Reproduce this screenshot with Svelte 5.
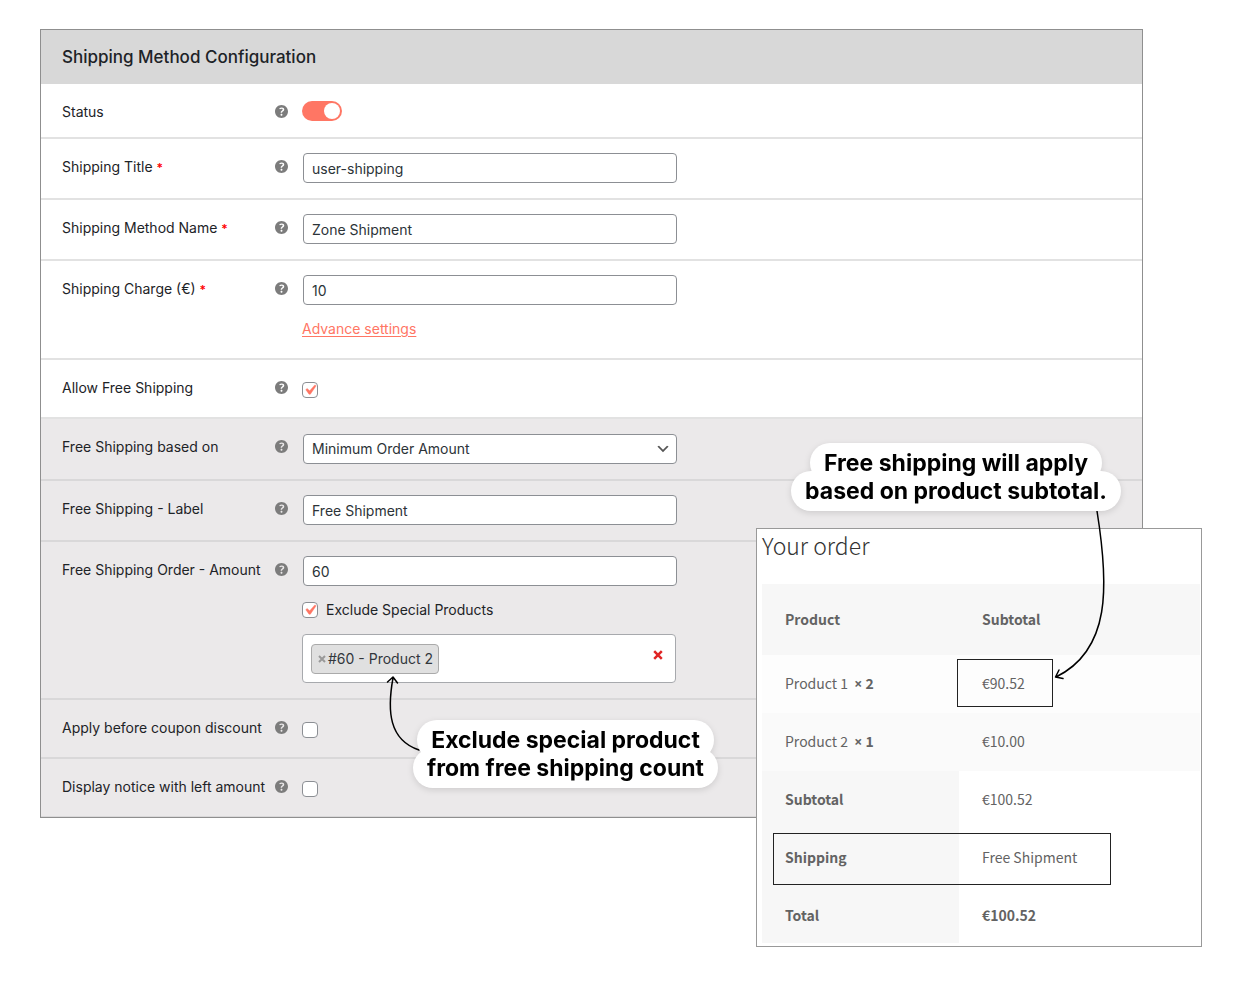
<script>
  const checkPath = 'M14.83 4.89l1.34.94-5.81 8.38H9.02L5.78 9.67l1.34-1.25 2.57 2.4z';

  let enabled = $state(true);
  let title = $state('user-shipping');
  let methodName = $state('Zone Shipment');
  let charge = $state('10');
  let allowFree = $state(true);
  let basis = $state('Minimum Order Amount');
  let freeLabel = $state('Free Shipment');
  let freeAmount = $state('60');
  let excludeSpecial = $state(true);
  let beforeCoupon = $state(false);
  let displayNotice = $state(false);
</script>

{#snippet help()}
  <svg class="help" viewBox="3 3 14 14" aria-hidden="true">
    <path
      d="M17 10c0-3.87-3.14-7-7-7-3.87 0-7 3.13-7 7s3.13 7 7 7c3.86 0 7-3.13 7-7zm-6.3 1.48H9.14v-.43c0-.38.08-.7.24-.98s.46-.57.88-.89c.41-.29.68-.53.81-.71.14-.18.2-.39.2-.62 0-.25-.09-.44-.28-.58-.19-.13-.45-.19-.79-.19-.58 0-1.25.19-2 .57l-.64-1.28c.87-.49 1.8-.74 2.77-.74.81 0 1.45.2 1.92.58.48.39.71.91.71 1.55 0 .43-.09.8-.29 1.11-.19.32-.57.67-1.11 1.06-.38.28-.61.49-.71.63-.1.15-.15.34-.15.57v.35zm-1.47 2.74c-.18-.17-.27-.42-.27-.73 0-.33.08-.58.26-.75s.43-.25.77-.25c.32 0 .57.09.75.26s.27.42.27.74c0 .3-.09.55-.27.72-.18.18-.43.27-.75.27-.33 0-.58-.09-.76-.26z"
    />
  </svg>
{/snippet}

{#snippet tick()}
  <svg class="tick" viewBox="0 0 20 20" aria-hidden="true"><path d={checkPath} /></svg>
{/snippet}

<div class="stage">
  <form class="panel" onsubmit={(e) => e.preventDefault()}>
    <h2>Shipping Method Configuration</h2>

    <div class="row">
      <label for="status">Status</label>
      {@render help()}
      <div class="control toggle-line">
        <input id="status" class="toggle" type="checkbox" bind:checked={enabled} />
      </div>
    </div>

    <div class="row">
      <label for="title">Shipping Title <span class="req">*</span></label>
      {@render help()}
      <div class="control"><input id="title" class="field" type="text" bind:value={title} /></div>
    </div>

    <div class="row">
      <label for="name">Shipping Method Name <span class="req">*</span></label>
      {@render help()}
      <div class="control"><input id="name" class="field" type="text" bind:value={methodName} /></div>
    </div>

    <div class="row">
      <label for="charge">Shipping Charge (€) <span class="req">*</span></label>
      {@render help()}
      <div class="control">
        <input id="charge" class="field" type="text" bind:value={charge} />
        <a class="advance" href="#advance">Advance settings</a>
      </div>
    </div>

    <div class="row">
      <label for="allow">Allow Free Shipping</label>
      {@render help()}
      <div class="control check-line">
        <span class="box"><input id="allow" type="checkbox" bind:checked={allowFree} />{@render tick()}</span>
      </div>
    </div>

    <div class="row shaded">
      <label for="basis">Free Shipping based on</label>
      {@render help()}
      <div class="control">
        <div class="select">
          <select id="basis" class="field" bind:value={basis}>
            <option>Minimum Order Amount</option>
          </select>
          <svg viewBox="0 0 20 20" aria-hidden="true"><path d="M5 6l5 5 5-5 2 1-7 7-7-7 2-1z" /></svg>
        </div>
      </div>
    </div>

    <div class="row shaded">
      <label for="free-label">Free Shipping - Label</label>
      {@render help()}
      <div class="control"><input id="free-label" class="field" type="text" bind:value={freeLabel} /></div>
    </div>

    <div class="row shaded">
      <label for="free-amount">Free Shipping Order - Amount</label>
      {@render help()}
      <div class="control">
        <input id="free-amount" class="field" type="text" bind:value={freeAmount} />
        <div class="exclude">
          <span class="box"><input id="exclude" type="checkbox" bind:checked={excludeSpecial} />{@render tick()}</span>
          <label for="exclude">Exclude Special Products</label>
        </div>
        <div class="multi">
          <span class="tag">
            <button type="button" aria-label="Remove product">
              <svg viewBox="0 0 8 8"><path d="M1 1l6 6M7 1l-6 6" /></svg>
            </button>#60 - Product 2
          </span>
          <button type="button" class="clear" aria-label="Clear all">
            <svg viewBox="0 0 10 10"><path d="M1.2 1.2l7.600 7.600M8.800 1.200l-7.600 7.600" /></svg>
          </button>
        </div>
      </div>
    </div>

    <div class="row shaded">
      <label for="coupon">Apply before coupon discount</label>
      {@render help()}
      <div class="control check-line">
        <span class="box"><input id="coupon" type="checkbox" bind:checked={beforeCoupon} />{@render tick()}</span>
      </div>
    </div>

    <div class="row shaded">
      <label for="notice">Display notice with left amount</label>
      {@render help()}
      <div class="control check-line">
        <span class="box"><input id="notice" type="checkbox" bind:checked={displayNotice} />{@render tick()}</span>
      </div>
    </div>
  </form>

  <section class="order">
    <h3>Your order</h3>
    <table>
      <thead>
        <tr><th scope="col">Product</th><th scope="col">Subtotal</th></tr>
      </thead>
      <tbody>
        <tr><td>Product 1 &nbsp;<b><span class="times">×</span> 2</b></td><td>€90.52</td></tr>
        <tr><td>Product 2 &nbsp;<b><span class="times">×</span> 1</b></td><td>€10.00</td></tr>
      </tbody>
      <tfoot>
        <tr><th scope="row">Subtotal</th><td>€100.52</td></tr>
        <tr><th scope="row">Shipping</th><td>Free Shipment</td></tr>
        <tr><th scope="row">Total</th><td><b>€100.52</b></td></tr>
      </tfoot>
    </table>
    <div class="mark mark-price"></div>
    <div class="mark mark-shipping"></div>
  </section>

  <svg class="arrow arrow-order" viewBox="0 0 60 175" aria-hidden="true">
    <path d="M47 5C59 80 61 144 6 171M9 164L5.500 171L13 172.500" />
  </svg>
  <svg class="arrow arrow-exclude" viewBox="0 0 40 84" aria-hidden="true">
    <path d="M35 77C5 67 3 38 9 5M3.500 9L9 4L13.500 10" />
  </svg>

  <p class="callout callout-order"><span>Free shipping will apply</span><span>based on product subtotal.</span></p>
  <p class="callout callout-exclude"><span>Exclude special product</span><span>from free shipping count</span></p>
</div>

<style>
  :global(body) {
    margin: 0;
    background: #fff;
  }

  .stage {
    position: relative;
    padding: 29px 100px 166px 40px;
    font-family: Inter, 'Liberation Sans', sans-serif;
    font-size: 14px;
    line-height: 20px;
    color: #1d2327;
  }

  .panel {
    border: 1px solid #8f8f8f;
    background: #fff;
  }

  h2 {
    margin: 0;
    padding: 15px 21px;
    background: #d8d8d8;
    font-size: 17px;
    line-height: 24px;
    font-weight: 500;
  }

  .row {
    display: grid;
    grid-template-columns: 213px 13px minmax(0, 374px);
    align-items: start;
    padding: 14px 21px 15px;
    border-bottom: 2px solid #e2e2e2;
  }

  .row:last-child {
    border-bottom-width: 1px;
  }

  .shaded {
    background: #ebe9ea;
    border-color: #d9d8d9;
  }

  .row > label {
    padding-top: 4px;
  }

  .req {
    color: #f00;
    font-size: 12px;
    font-weight: 600;
  }

  .help {
    width: 13px;
    height: 13px;
    margin-top: 7px;
    fill: #7c7c7c;
  }

  .control {
    width: 374px;
    margin-left: 15px;
  }

  .toggle-line {
    padding: 3px 0 1px;
    margin-left: 14px;
    height: 20px;
  }

  .check-line {
    padding: 8px 0 4px;
    margin-left: 14px;
  }

  .field {
    display: block;
    box-sizing: border-box;
    width: 100%;
    height: 30px;
    margin: 0;
    padding: 0 8px;
    border: 1px solid #8c8f94;
    border-radius: 4px;
    background: #fff;
    color: #2c3338;
    font: inherit;
    appearance: none;
  }

  .toggle {
    display: flex;
    align-items: center;
    box-sizing: border-box;
    width: 40px;
    height: 20px;
    margin: 0;
    padding: 0 2px;
    border-radius: 10px;
    background: #bbb;
    appearance: none;
  }

  .toggle::before {
    content: '';
    width: 16px;
    height: 16px;
    border-radius: 8px;
    background: #fff;
  }

  .toggle:checked {
    justify-content: flex-end;
    background: #ff7664;
  }

  .advance {
    display: inline-block;
    margin: 14px 0 4px -1px;
    color: #ff7664;
    text-underline-offset: 2px;
  }

  .box {
    display: grid;
    width: 16px;
    height: 16px;
  }

  .box > * {
    grid-area: 1 / 1;
  }

  .box input {
    box-sizing: border-box;
    width: 16px;
    height: 16px;
    margin: 0;
    border: 1px solid #8c8f94;
    border-radius: 4px;
    background: #fff;
    appearance: none;
  }

  .tick {
    width: 20px;
    height: 20px;
    margin: -2px;
    fill: #ff7664;
    stroke: #ff7664;
    stroke-width: 0.4;
    visibility: hidden;
    pointer-events: none;
  }

  .box input:checked + .tick {
    visibility: visible;
  }

  .select {
    position: relative;
    margin-top: 1px;
  }

  .select svg {
    position: absolute;
    top: 7px;
    right: 6px;
    width: 16px;
    height: 16px;
    fill: #555;
    pointer-events: none;
  }

  .exclude {
    display: flex;
    align-items: center;
    gap: 8px;
    margin: 14px 0 14px -1px;
  }

  .multi {
    display: flex;
    align-items: center;
    justify-content: space-between;
    box-sizing: border-box;
    height: 49px;
    margin: 0 1px 0 -1px;
    padding: 0 12px 0 8px;
    border: 1px solid #a7a9ad;
    border-radius: 4px;
    background: #fff;
  }

  .multi button {
    display: inline-flex;
    margin: 0;
    padding: 0;
    border: 0;
    background: none;
  }

  .tag {
    display: flex;
    align-items: center;
    gap: 2px;
    box-sizing: border-box;
    height: 30px;
    padding: 0 5px 0 6px;
    border: 1px solid #aaa;
    border-radius: 4px;
    background: #e0e0e0;
    color: #32373c;
  }

  .tag svg {
    width: 8px;
    height: 8px;
    stroke: #999;
    stroke-width: 2;
  }

  .clear {
    align-self: flex-start;
  }

  .clear svg {
    width: 10px;
    height: 10px;
    margin-top: 15px;
    stroke: #e02424;
    stroke-width: 2.5;
  }

  .order {
    position: absolute;
    top: 528px;
    right: 41px;
    box-sizing: border-box;
    width: 446px;
    padding: 0 1px 3px 5px;
    border: 1px solid #999;
    background: #fff;
    color: #636363;
    font-family: 'Noto Sans CJK SC', 'Noto Sans', sans-serif;
    font-size: 14px;
  }

  h3 {
    margin: 0;
    padding: 0 0 23px;
    color: #333;
    font-size: 23px;
    line-height: 32px;
    font-weight: 300;
  }

  table {
    width: 100%;
    table-layout: fixed;
    border-collapse: collapse;
    text-align: left;
  }

  th,
  td {
    padding: 18px 23px 20px;
  }

  th:first-child {
    width: 151px;
  }

  th,
  b {
    font-weight: 700;
  }

  thead th {
    padding: 25px 23px 26px;
    background: #f7f7f7;
  }

  tbody tr {
    background: #fdfdfd;
  }

  tbody tr:nth-child(2) {
    background: #fafafa;
  }

  tfoot th {
    background: #f7f7f7;
  }

  tfoot tr:last-child > * {
    padding-bottom: 18px;
  }

  .times {
    font-family: 'Noto Sans', sans-serif;
    line-height: 1;
  }

  .mark {
    position: absolute;
    box-sizing: border-box;
    border: 1px solid #222;
  }

  .mark-price {
    top: 130px;
    left: 200px;
    width: 96px;
    height: 48px;
  }

  .mark-shipping {
    top: 304px;
    left: 16px;
    width: 338px;
    height: 52px;
  }

  .arrow {
    position: absolute;
    fill: none;
    stroke: #000;
    stroke-width: 1.5;
    stroke-linecap: round;
    stroke-linejoin: round;
  }

  .arrow-order {
    top: 506px;
    right: 133px;
    width: 60px;
    height: 175px;
  }

  .arrow-exclude {
    top: 673px;
    left: 384px;
    width: 40px;
    height: 84px;
  }

  .callout {
    position: absolute;
    display: flex;
    flex-direction: column;
    align-items: center;
    margin: 0;
    color: #000;
    font-size: 23px;
    line-height: 28px;
    font-weight: 700;
    white-space: nowrap;
    filter: drop-shadow(0 2px 3px rgb(0 0 0 / 12%));
  }

  .callout span {
    position: relative;
    padding: 0 14px;
  }

  .callout span::before {
    content: '';
    position: absolute;
    z-index: -1;
    inset: -6px 0;
    border-radius: 20px;
    background: #fff;
  }

  .callout-order {
    top: 449px;
    right: 122px;
  }

  .callout-exclude {
    top: 726px;
    left: 413px;
  }
</style>
